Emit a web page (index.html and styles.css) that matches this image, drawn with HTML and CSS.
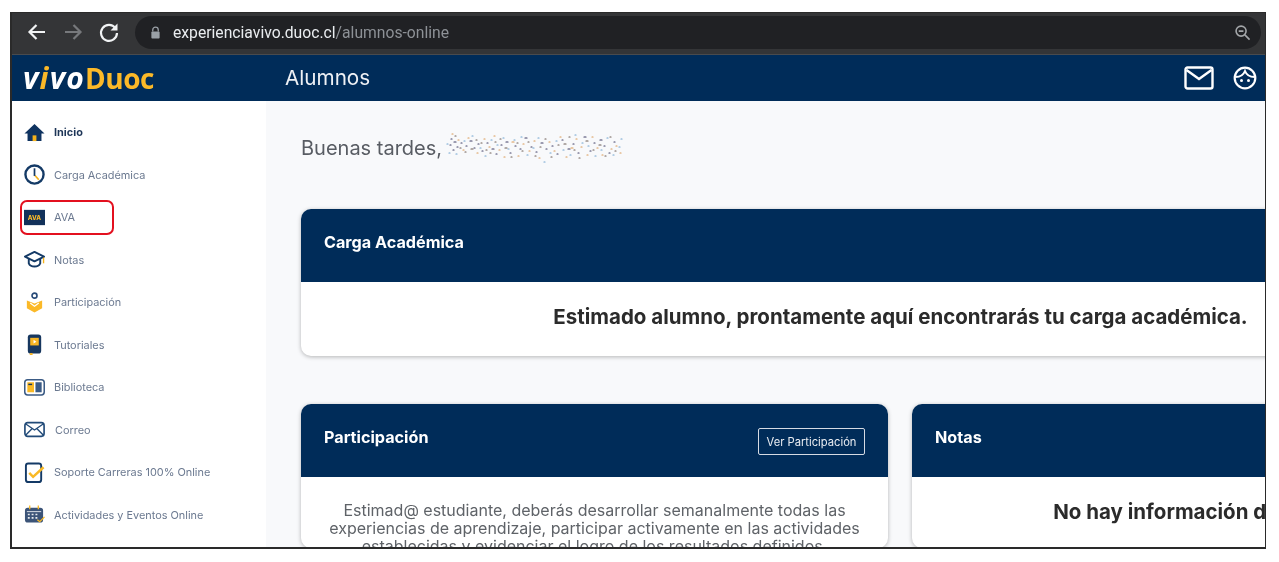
FILE: index.html
```html
<!DOCTYPE html>
<html lang="es">
<head>
<meta charset="utf-8">
<title>Alumnos</title>
<link rel="stylesheet" href="styles.css">
</head>
<body>
<div class="frame">
  <div class="toolbar">
    <svg class="nav-icon" viewBox="0 0 24 24"><path d="M20 12H5M11.500 5L4.500 12l7 7" fill="none" stroke="#f1f3f4" stroke-width="2.200"/></svg>
    <svg class="nav-icon" viewBox="0 0 24 24"><path d="M4 12h15M12.500 5l7 7-7 7" fill="none" stroke="#77797c" stroke-width="2.200"/></svg>
    <svg class="nav-icon" viewBox="0 0 24 24"><path d="M18.500 8.200A8 8 0 1 0 20 13" fill="none" stroke="#f1f3f4" stroke-width="2.200"/><path d="M20.500 3.500v7h-7z" fill="#f1f3f4"/></svg>
    <div class="address">
      <svg class="lock" viewBox="0 0 12 14"><path d="M3 6V4.200a3 3 0 0 1 6 0V6" fill="none" stroke="#9aa0a6" stroke-width="1.400"/><rect x="1.500" y="6" width="9" height="7.500" rx="1" fill="#9aa0a6"/></svg>
      <span class="url">experienciavivo.duoc.cl<span class="url-path">/alumnos-online</span></span>
      <svg class="zoom-icon" viewBox="0 0 18 18"><circle cx="7.500" cy="7.500" r="5.300" fill="none" stroke="#a3a6a9" stroke-width="1.700"/><path d="M5 7.500h5M11.500 11.500l5 5" stroke="#a3a6a9" stroke-width="1.700" fill="none"/></svg>
    </div>
  </div>

  <header class="appbar">
    <div class="logo"><span class="logo-vivo">v<span class="logo-i">i</span>v<span class="logo-o">o</span></span><span class="logo-duoc">Duoc</span></div>
    <h1 class="app-title">Alumnos</h1>
    <svg class="mail-icon" viewBox="0 0 30 24"><rect x="1.500" y="1.500" width="27" height="21" rx="2" fill="none" stroke="#fff" stroke-width="2.400"/><path d="M2.500 4l12.500 9 12.500-9" fill="none" stroke="#fff" stroke-width="2.400"/></svg>
    <svg class="face-icon" viewBox="0 0 24 24"><circle cx="12" cy="12" r="10.300" fill="none" stroke="#fff" stroke-width="2.200"/><path d="M2.500 11C7 11 10.500 9 12 5c1.500 4 5 6 9.500 6" fill="none" stroke="#fff" stroke-width="2"/><circle cx="8.500" cy="14.500" r="1.500" fill="#fff"/><circle cx="15.500" cy="14.500" r="1.500" fill="#fff"/></svg>
  </header>

  <div class="main">
    <nav class="sidebar">
      <a class="nav-item active">
        <svg class="ico" viewBox="0 0 22 20"><path d="M11 1L.5 11h3.200v8h14.600v-8h3.200z" fill="#0f3360"/><rect x="9" y="13" width="4" height="6" fill="#f5b21b"/></svg>
        <span>Inicio</span>
      </a>
      <a class="nav-item">
        <svg class="ico" viewBox="0 0 22 22"><circle cx="11" cy="11" r="9.500" fill="#fff" stroke="#143a66" stroke-width="2.500"/><path d="M11.500 12l4 4.500" fill="none" stroke="#f5b21b" stroke-width="1.800"/><path d="M11 4.500V12.500" stroke="#143a66" stroke-width="1.800"/></svg>
        <span>Carga Académica</span>
      </a>
      <a class="nav-item">
        <svg class="ico" viewBox="0 0 22 16"><rect width="22" height="16" fill="#12315a"/><text x="11" y="10.600" class="ava-text">AVA</text></svg>
        <span>AVA</span>
        <i class="highlight"></i>
      </a>
      <a class="nav-item">
        <svg class="ico" viewBox="0 0 22 18"><path d="M11 1L1 6l10 5 10-5z" fill="#fff" stroke="#143a66" stroke-width="2" stroke-linejoin="round"/><path d="M5 8.500V13c2 4.500 10 4.500 12 0V8.500" fill="none" stroke="#143a66" stroke-width="2"/><path d="M20.500 7v6" stroke="#f5b21b" stroke-width="1.400"/></svg>
        <span>Notas</span>
      </a>
      <a class="nav-item">
        <svg class="ico" viewBox="0 0 22 22"><circle cx="11" cy="3.800" r="2.600" fill="none" stroke="#284b78" stroke-width="1.700"/><path d="M3 9L11 12l8-3v8l-8 4.500L3 17z" fill="#fbb928"/><path d="M6.500 11.500L11 15l4.500-3.500" stroke="#fff" stroke-width="1.300" fill="none"/></svg>
        <span>Participación</span>
      </a>
      <a class="nav-item">
        <svg class="ico" viewBox="0 0 22 22"><rect x="4" y=".5" width="14" height="20" rx="3" fill="#17375f"/><rect x="6.500" y="4" width="9" height="8" fill="#f7b524"/><path d="M10 6l3 2-3 2z" fill="#fff"/><rect x="6" y="20" width="3" height="2" fill="#f7b524"/></svg>
        <span>Tutoriales</span>
      </a>
      <a class="nav-item">
        <svg class="ico" viewBox="0 0 22 18"><rect x=".8" y=".8" width="20.400" height="16" rx="3" fill="#fff" stroke="#3b5b85" stroke-width="1.600"/><rect x="3.500" y="3.500" width="7" height="10.500" fill="#f9b925"/><rect x="12" y="3.500" width="6.500" height="10.500" fill="#3b5b85"/><rect x="4.500" y="5" width="4" height="1.500" fill="#17375f"/></svg>
        <span>Biblioteca</span>
      </a>
      <a class="nav-item">
        <svg class="ico" viewBox="0 0 23 17"><rect x="1" y="1" width="21" height="15" rx="3" fill="none" stroke="#214a78" stroke-width="1.800"/><path d="M2 2.500L11.500 9 21 2.500M2 14.500L9 7.500M21 14.500L14 7.500" fill="none" stroke="#214a78" stroke-width="1.500"/></svg>
        <span class="label-correo">Correo</span>
      </a>
      <a class="nav-item">
        <svg class="ico" viewBox="0 0 22 22"><rect x="2" y="1.500" width="16" height="19.500" rx="2.500" fill="none" stroke="#143a66" stroke-width="2"/><path d="M5.500 11.500L9.500 15.500 20.500 5.500" fill="none" stroke="#f9b925" stroke-width="2.600"/></svg>
        <span>Soporte Carreras 100% Online</span>
      </a>
      <a class="nav-item">
        <svg class="ico" viewBox="0 0 22 20"><rect x="1" y="3" width="19" height="15.500" rx="3" fill="#3c5478"/><rect x="3" y="6.500" width="15" height="1" fill="#dfe4ea"/><path d="M4 10h2M8 10h2M12 10h2M4 13.500h2M8 13.500h2M12 13.500h2" stroke="#e8ebef" stroke-width="1.700"/><path d="M6 .5v4M15 .5v4" stroke="#f9b925" stroke-width="1.400"/><path d="M14 15.500l2.500 2 5-5" fill="none" stroke="#f9b925" stroke-width="1.400"/></svg>
        <span>Actividades y Eventos Online</span>
      </a>
    </nav>

    <main class="content">
      <div class="greeting">
        <span>Buenas tardes,</span>
        <svg class="noise" viewBox="0 0 180 36">
          <path class="n1" d="M7 10h1M10 13h2M6 16h1M13 18h1M17 14h1M9 21h1M22 17h1M26 12h2M30 19h1M34 15h1M38 22h1M43 14h1M48 20h2M52 25h1M57 16h1M62 13h2M66 24h1M71 17h1M76 20h1M81 9h2M87 18h1M92 23h1M97 14h2M102 20h1M108 17h1M113 25h1M118 11h1M124 20h2M129 15h1M134 24h1M140 8h2M146 22h1M150 14h1M156 11h2M160 17h1M165 24h1M170 13h1"/>
          <path class="n2" d="M8 5h1M14 11h1M19 21h1M24 9h1M33 24h1M40 10h1M45 18h1M50 7h1M55 21h1M60 28h1M68 13h2M74 27h1M79 15h1M85 22h1M90 12h1M95 29h1M105 13h1M110 22h1M116 8h1M122 28h1M127 19h2M132 10h1M137 18h1M143 26h1M148 8h1M153 19h1M158 26h1M167 20h1M172 17h1M176 24h1"/>
          <path class="n3" d="M3 15h1M5 24h1M12 25h1M20 12h1M28 7h1M36 19h1M41 27h1M47 11h1M53 16h1M59 9h1M64 20h1M70 11h1M77 8h1M83 26h1M89 19h1M94 9h1M100 33h1M106 24h1M112 12h1M119 21h1M126 26h1M131 6h1M138 14h1M144 17h1M151 27h1M157 21h1M163 9h1M169 26h1M175 18h1M177 10h1"/>
          <path class="n4" d="M11 7h1M16 19h1M21 23h1M27 20h2M32 11h1M37 14h1M42 21h1M46 24h1M51 13h1M56 10h1M61 19h2M67 28h1M73 14h1M78 22h1M84 13h1M91 27h1M96 18h1M101 10h1M107 28h1M114 16h1M120 15h2M125 8h1M130 21h1M135 29h1M142 12h2M149 21h1M155 16h2M161 27h1M166 8h1M171 22h1"/>
        </svg>
      </div>

      <section class="card card-wide">
        <div class="card-head"><h2>Carga Académica</h2></div>
        <div class="card-body card-message">Estimado alumno, prontamente aquí encontrarás tu carga académica.</div>
      </section>

      <div class="card-row">
        <section class="card card-half">
          <div class="card-head">
            <h2>Participación</h2>
            <a class="btn">Ver Participación</a>
          </div>
          <div class="card-body card-text">Estimad@ estudiante, deberás desarrollar semanalmente todas las experiencias de aprendizaje, participar activamente en las actividades establecidas y evidenciar el logro de los resultados definidos.</div>
        </section>
        <section class="card card-half">
          <div class="card-head"><h2>Notas</h2></div>
          <div class="card-body card-message card-empty">No hay información disponible</div>
        </section>
      </div>
    </main>
  </div>
</div>
</body>
</html>
```

FILE: styles.css
```css
* { box-sizing: border-box; }
html, body { margin: 0; height: 100%; background: #fff; overflow: hidden; }
body { padding: 12px 0 0 10px; font-family: Inter, "Liberation Sans", sans-serif; }

.frame {
  width: 1256px;
  height: 537px;
  border-style: solid;
  border-color: #2a2a2a;
  border-width: 1.500px 1.500px 2px 2px;
  display: flex;
  flex-direction: column;
  overflow: hidden;
  background: #fff;
  filter: blur(0.45px);
}

/* browser chrome */
.toolbar {
  height: 42px;
  flex: none;
  display: flex;
  align-items: flex-start;
  padding: 2px 4px 0 13px;
  gap: 12px;
  background: #343537;
  border-bottom: 1px solid #4a4b4d;
}
.nav-icon { width: 24px; height: 24px; margin-top: 5px; flex: none; }
.address {
  flex: 1;
  height: 33px;
  margin: 1px 0 0 2px;
  padding: 0 10px 0 15px;
  border-radius: 17px;
  background: #202124;
  display: flex;
  align-items: center;
  gap: 12px;
}
.lock { width: 11px; height: 13px; flex: none; }
.url { flex: 1; font-family: Roboto, sans-serif; font-size: 15.700px; color: #e9ecef; }
.url-path { color: #8d9196; }
.zoom-icon { width: 17px; height: 17px; flex: none; }

/* app bar */
.appbar {
  height: 46px;
  flex: none;
  display: flex;
  align-items: center;
  padding: 0 8px 0 11px;
  background: #002c59;
  color: #fff;
}
.logo { width: 262px; font-family: "Open Sans", sans-serif; font-weight: 700; font-size: 28px; line-height: 46px; white-space: nowrap; }
.logo-vivo { font-style: italic; font-weight: 700; font-size: 30px; color: #fff; letter-spacing: 1.200px; }
.logo-i { color: #fbb928; }
.logo-duoc { color: #fbb928; letter-spacing: -0.500px; }
.app-title { flex: 1; margin: 0 0 2px; font-size: 20.700px; font-weight: 400; color: #eef1f5; }
.mail-icon { width: 30px; height: 24px; margin-right: 19px; }
.face-icon { width: 24px; height: 24px; }

/* layout */
.main { flex: 1; min-height: 0; display: flex; }
.sidebar {
  width: 254px;
  flex: none;
  padding: 10px 0 0 12px;
  display: flex;
  flex-direction: column;
  background: #fff;
}
.nav-item {
  position: relative;
  height: 42.500px;
  flex: none;
  display: flex;
  align-items: center;
  gap: 9px;
  font-size: 10.900px;
  color: #6b7990;
}
.nav-item.active { color: #1d3557; font-weight: 700; }
.ico { width: 21px; height: 23px; flex: none; }
.label-correo { margin-left: 1px; }
.ava-text { font: 800 6.500px Inter, sans-serif; fill: #fbb928; text-anchor: middle; }
.highlight {
  position: absolute;
  left: -4px;
  top: 4px;
  width: 94px;
  height: 35px;
  border: 2px solid #e3101f;
  border-radius: 7px;
}

/* content */
.content {
  flex: 1;
  min-width: 0;
  overflow: hidden;
  padding: 0 0 0 35px;
  background: #f8f9fb;
}
.greeting {
  height: 108px;
  padding-top: 32px;
  display: flex;
  align-items: flex-start;
  gap: 2px;
  font-size: 20px;
  line-height: 30px;
  color: #585c63;
}
.noise { width: 180px; height: 36px; margin-top: -4px; flex: none; fill: none; stroke-linecap: round; stroke-width: 1.200; }
.n1 { stroke: #3f3f66; }
.n2 { stroke: #d99a55; }
.n3 { stroke: #6fa3cf; }
.n4 { stroke: #6b5c55; }

.card {
  flex: none;
  border-radius: 10px;
  background: #fff;
  box-shadow: 0 1px 4px rgba(0, 0, 0, 0.28);
  overflow: hidden;
}
.card-wide { width: 1199px; height: 147px; }
.card-row { display: flex; gap: 24px; margin-top: 48px; width: 1199px; }
.card-half { width: 587px; height: 144px; }
.card-head {
  height: 73px;
  display: flex;
  align-items: center;
  justify-content: space-between;
  padding: 0 23px;
  background: #002c59;
  color: #fff;
}
.card-head h2 { margin: 0 0 8px; font-size: 16.200px; font-weight: 700; }
.card-body { text-align: center; }
.card-message { padding-top: 22px; font-size: 20.500px; line-height: 26px; font-weight: 700; color: #2b2b2b; }
.card-text { padding: 24px 24px 0; font-size: 16px; line-height: 18px; color: #5f6368; }
.btn {
  width: 107px;
  height: 27px;
  margin-top: 2px;
  display: flex;
  align-items: center;
  justify-content: center;
  border: 1.500px solid #d5dbe3;
  border-radius: 2px;
  font-size: 11.200px;
  color: #e8ecf1;
}
```
